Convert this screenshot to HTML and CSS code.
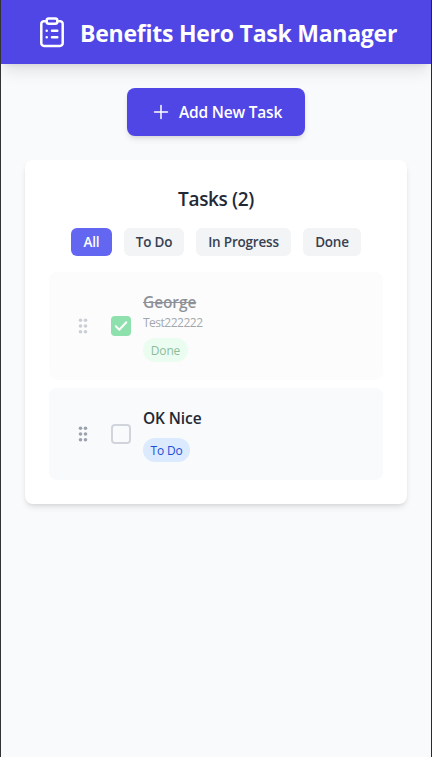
FILE: index.html
```html
<!DOCTYPE html>
<html lang="en">
<head>
<meta charset="utf-8">
<title>Benefits Hero Task Manager</title>
<link rel="stylesheet" href="styles.css">
</head>
<body>
<div class="app">
  <header class="header">
    <svg class="logo" viewBox="0 0 32 32" fill="none" stroke="currentColor" stroke-width="2.5" stroke-linecap="round" stroke-linejoin="round">
      <path d="M10.500 5.200H8a2.700 2.700 0 0 0-2.700 2.700v19.400a2.700 2.700 0 0 0 2.700 2.700h16a2.700 2.700 0 0 0 2.700-2.700V7.900a2.700 2.700 0 0 0-2.700-2.700h-2.500"/>
      <rect x="10.700" y="2.500" width="10.600" height="5.300" rx="2"/>
      <path d="M10.700 14.700h.02M16 14.700h5.300M10.700 21.300h.02M16 21.300h5.300"/>
    </svg>
    <h1 class="title">Benefits Hero Task Manager</h1>
  </header>
  <main class="main">
    <button class="add">
      <svg class="plus" viewBox="0 0 20 20" fill="none" stroke="currentColor" stroke-width="1.500" stroke-linecap="round"><path d="M10 3.500v13M3.500 10h13"/></svg>
      <span>Add New Task</span>
    </button>
    <section class="card">
      <h2 class="heading">Tasks (2)</h2>
      <nav class="filters">
        <button class="filter all">All</button>
        <button class="filter todo">To Do</button>
        <button class="filter progress">In Progress</button>
        <button class="filter finished">Done</button>
      </nav>
      <ul class="tasks">
        <li class="task complete">
          <svg class="grip" viewBox="0 0 10 16" fill="currentColor"><circle cx="2.500" cy="2.200" r="1.800"/><circle cx="7.500" cy="2.200" r="1.800"/><circle cx="2.500" cy="8" r="1.800"/><circle cx="7.500" cy="8" r="1.800"/><circle cx="2.500" cy="13.800" r="1.800"/><circle cx="7.500" cy="13.800" r="1.800"/></svg>
          <span class="check checked"><svg viewBox="0 0 20 20" fill="none" stroke="#fff" stroke-width="2" stroke-linecap="round" stroke-linejoin="round"><path d="M4.800 10.300 8.300 13.700 15.300 6.200"/></svg></span>
          <div class="details">
            <h3 class="name">George</h3>
            <p class="description">Test222222</p>
            <span class="badge green">Done</span>
          </div>
        </li>
        <li class="task">
          <svg class="grip" viewBox="0 0 10 16" fill="currentColor"><circle cx="2.500" cy="2.200" r="1.800"/><circle cx="7.500" cy="2.200" r="1.800"/><circle cx="2.500" cy="8" r="1.800"/><circle cx="7.500" cy="8" r="1.800"/><circle cx="2.500" cy="13.800" r="1.800"/><circle cx="7.500" cy="13.800" r="1.800"/></svg>
          <span class="check"></span>
          <div class="details">
            <h3 class="name">OK Nice</h3>
            <span class="badge blue">To Do</span>
          </div>
        </li>
      </ul>
    </section>
  </main>
</div>
</body>
</html>
```
FILE: styles.css
```css
* { box-sizing: border-box; margin: 0; padding: 0; }
body { background: #f9fafb; font-family: "Open Sans", "Noto Sans", sans-serif; color: #1f2937; }
button { border: 0; font-family: inherit; white-space: nowrap; }
.app { min-height: 757px; border-left: 1px solid #333; border-right: 1px solid #292929; overflow: hidden; }
.header { height: 64px; display: flex; align-items: center; padding-left: 35px; gap: 12px; background: #4f46e5; color: #fff; box-shadow: 0 10px 15px -3px rgba(0,0,0,.1), 0 4px 6px -4px rgba(0,0,0,.1); }
.logo { width: 32px; height: 32px; flex: none; }
.title { font-size: 23px; line-height: 32px; font-weight: 700; letter-spacing: -.24px; white-space: nowrap; padding-top: 2px; }
.main { padding: 24px; }
.add { display: flex; align-items: center; width: 178px; height: 48px; margin: 0 auto 24px; padding-left: 24px; gap: 8px; border-radius: 8px; background: #4f46e5; color: #fff; font-size: 15.500px; font-weight: 600; letter-spacing: -.2px; box-shadow: 0 4px 6px -1px rgba(0,0,0,.1), 0 2px 4px -2px rgba(0,0,0,.1); }
.plus { width: 20px; height: 20px; }
.card { height: 344px; padding: 24px; background: #fff; border-radius: 8px; box-shadow: 0 4px 6px -1px rgba(0,0,0,.1), 0 2px 4px -2px rgba(0,0,0,.1); }
.heading { text-align: center; font-size: 19px; line-height: 30px; height: 28px; font-weight: 600; letter-spacing: -.35px; margin-bottom: 16px; }
.filters { display: flex; justify-content: center; gap: 12px; margin-bottom: 16px; }
.filter { height: 28px; border-radius: 6px; background: #f3f4f6; color: #374151; font-size: 13.500px; font-weight: 600; letter-spacing: -.2px; }
.all { width: 41px; background: #6366f1; color: #fff; }
.todo { width: 60px; }
.progress { width: 95px; }
.finished { width: 58px; }
.tasks { list-style: none; display: flex; flex-direction: column; gap: 8px; }
.task { height: 92px; display: flex; align-items: center; padding-left: 29px; background: #f9fafb; border-radius: 8px; }
.complete { height: 108px; background: #fcfcfc; }
.grip { width: 10px; height: 16px; color: #9ca3af; margin-right: 23px; }
.check { width: 20px; height: 20px; border: 2px solid #d1d5db; border-radius: 4px; margin-right: 12px; }
.checked { border: 0; background: #22c55e; }
.checked svg { display: block; }
.complete .grip, .complete .check, .complete .details { opacity: .5; }
.name { font-size: 15.500px; line-height: 25px; height: 24px; font-weight: 600; letter-spacing: -.1px; }
.complete .name { text-decoration: line-through; }
.description { font-size: 12px; line-height: 18px; height: 16px; color: #4b5563; letter-spacing: -.5px; }
.badge { display: flex; align-items: center; justify-content: center; height: 24px; border-radius: 12px; font-size: 12px; letter-spacing: -.15px; margin-top: 8px; }
.green { width: 45px; background: #dcfce7; color: #15803d; }
.blue { width: 47px; background: #dbeafe; color: #1d4ed8; }
```
